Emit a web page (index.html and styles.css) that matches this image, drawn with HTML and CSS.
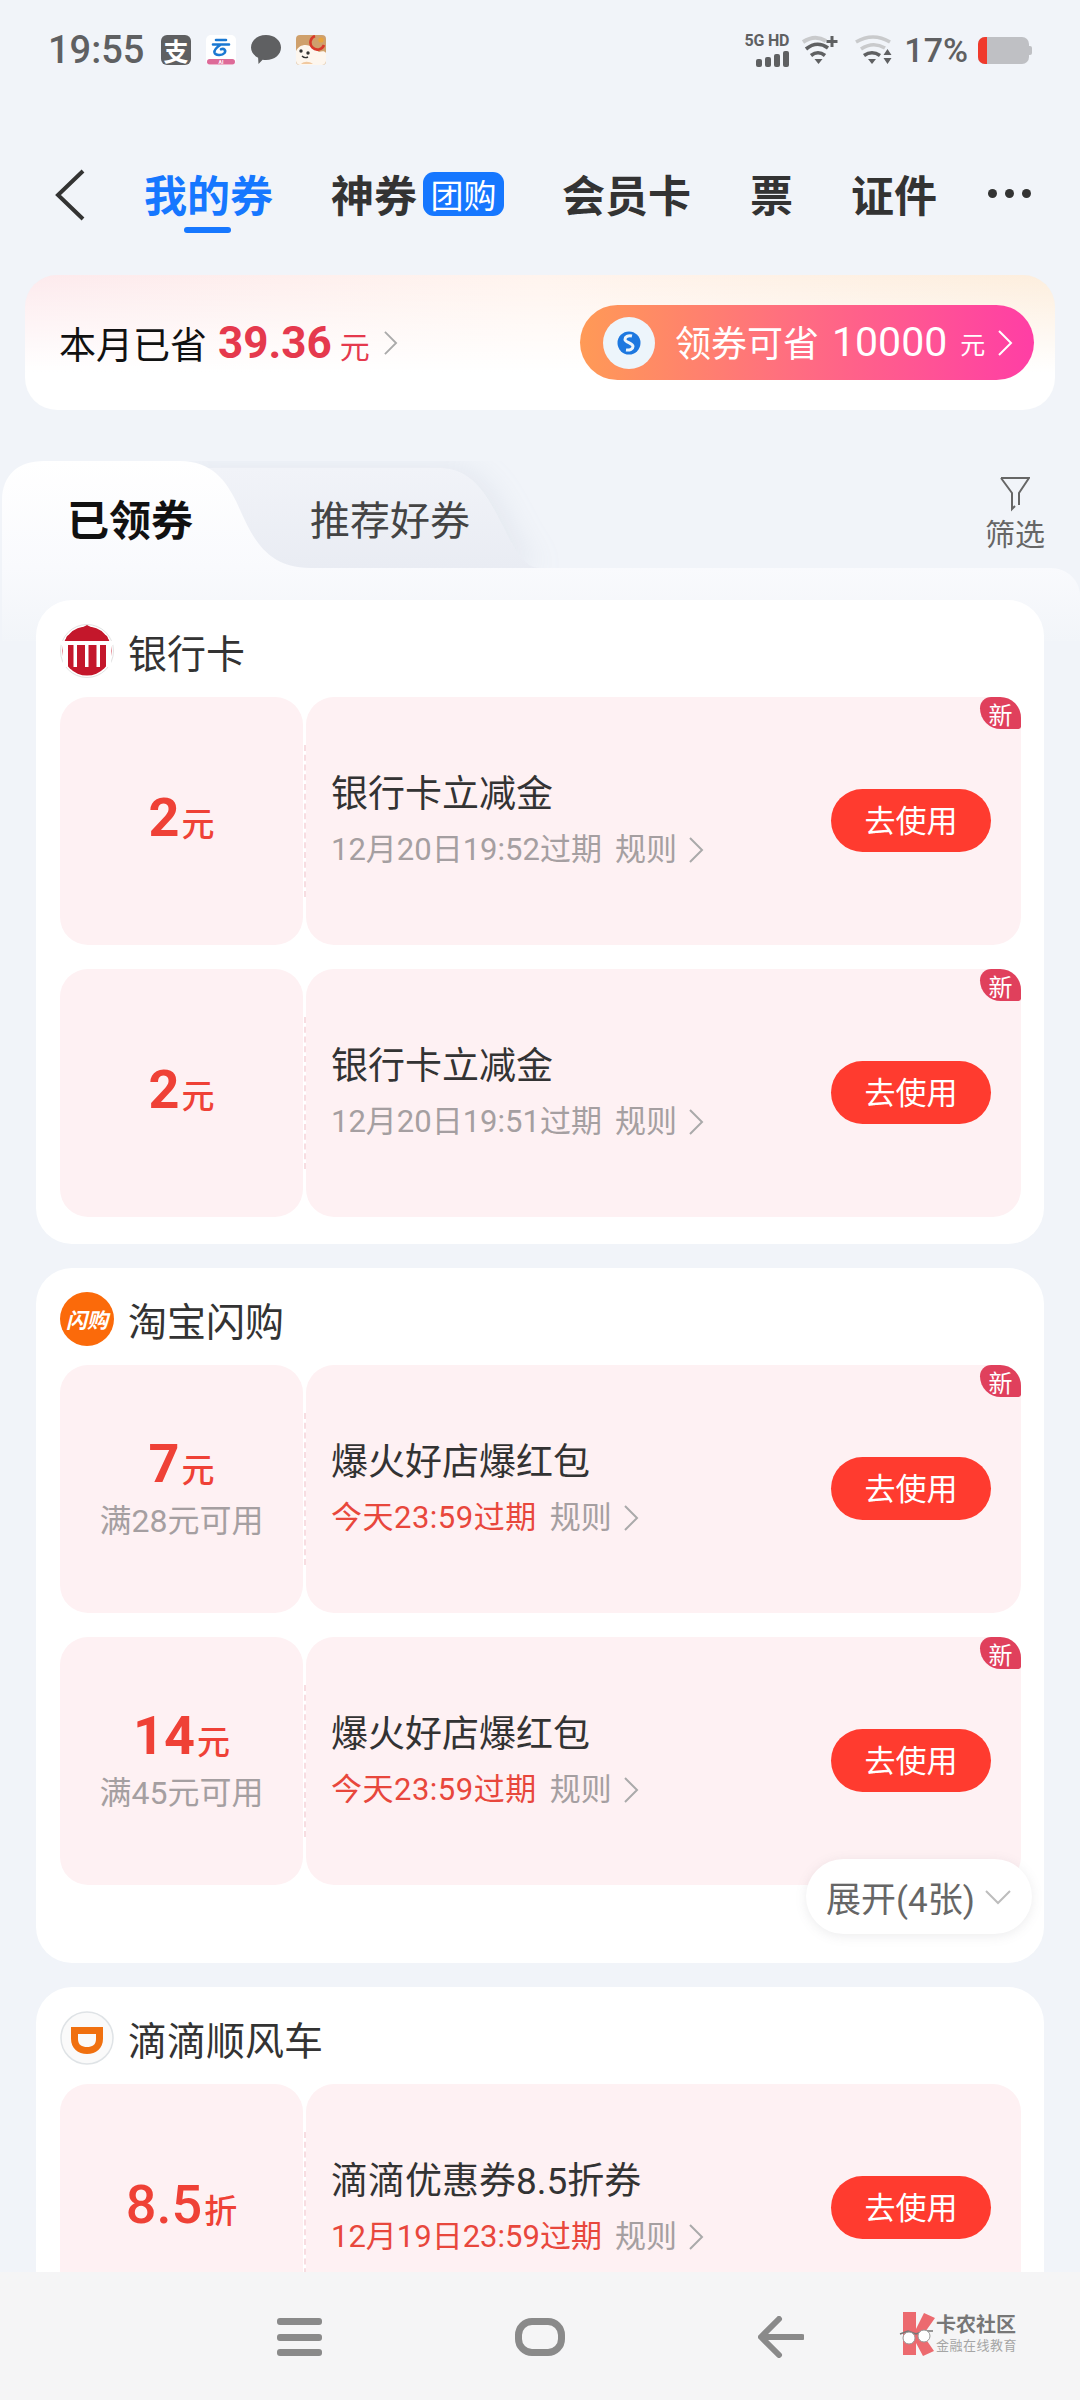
FILE: index.html
```html
<!DOCTYPE html>
<html lang="zh-CN">
<head>
  <meta charset="UTF-8" />
  <meta name="viewport" content="width=device-width, initial-scale=1.0"/>
  <title>我的券</title>
  <link rel="stylesheet" href="styles.css">
</head>
<body>
  <div class="screen">
    <main class="main">
      <!-- Status bar -->
      <div class="status">
        <span class="time">19:55</span>
        <span class="app-icon app-alipay">支</span>
        <svg class="app-icon" viewBox="0 0 30 30">
          <rect width="30" height="30" rx="5" fill="#fff"/>
          <path d="M10 5h10M7 9.500h16M15 9.500c-4 2.500-7 5.500-6.500 8 .7 3 7.500 3.500 10 .5 1.800-2.500-.5-5-3.500-3.800" fill="none" stroke="#1a78d2" stroke-width="2.600" stroke-linecap="round"/>
          <rect x="1" y="24" width="28" height="5.500" rx="2.700" fill="#dd6a98"/>
          <text x="15" y="28.500" class="ai-text">AI</text>
        </svg>
        <svg class="app-icon" viewBox="0 0 30 30">
          <path d="M15 0c8.500 0 15 5.500 15 12.500S23.500 25 15 25c-1.200 0-2.300-.1-3.400-.3L7.500 29l-.4-6.300C2.800 20.500 0 16.800 0 12.500 0 5.500 6.500 0 15 0z" fill="#5f6062"/>
        </svg>
        <svg class="app-icon" viewBox="0 0 30 30">
          <rect width="30" height="30" rx="4" fill="#cfa06c"/>
          <path d="M0 16c3-7 12-8 17-3l6 4c3-1 6-1 7 1v8c0 2-2 4-4 4H4c-2 0-4-2-4-4z" fill="#fdf6ee"/>
          <path d="M5 29c3-3 8-3 12 0z" fill="#f1c9a0"/>
          <circle cx="5" cy="16" r="1.700" fill="#333"/>
          <circle cx="12" cy="18" r="1.700" fill="#333"/>
          <path d="M6 21c2 2 4 2 6 1" fill="none" stroke="#333" stroke-width="1.400"/>
          <path d="M19 1a7 7 0 1 0 9 9" fill="none" stroke="#d8392b" stroke-width="2.600"/>
          <circle cx="25" cy="5" r="2.600" fill="#e8a33c"/>
        </svg>
        <span class="status-gap"></span>
        <span class="signal">
          <span class="signal-text">5G HD</span>
          <span class="bars"><i class="b1"></i><i class="b2"></i><i class="b3"></i><i class="b4"></i></span>
        </span>
        <svg class="wifi wifi-plus" viewBox="0 0 38 30">
          <path d="M1 7Q13-1 24 6" fill="none" stroke="#c9cacc" stroke-width="4"/>
          <path d="M4 14Q15 5 26 13M9 20.500Q16 15 23 20.500" fill="none" stroke="#5f6062" stroke-width="3.600"/>
          <path d="M12.500 24h8l-4 5z" fill="#5f6062"/>
          <path d="M30 1v11M24.500 6.500h11" stroke="#5f6062" stroke-width="3"/>
        </svg>
        <svg class="wifi wifi-last" viewBox="0 0 38 30">
          <path d="M1 7Q18-3 35 7M6 14Q18 6 30 13" fill="none" stroke="#c9cacc" stroke-width="3.600"/>
          <path d="M9 20.500Q17 15 25 20.500" fill="none" stroke="#5f6062" stroke-width="3.600"/>
          <path d="M13 24h8l-4 5z" fill="#5f6062"/>
          <path d="M32.500 14l4 6h-8zM32.500 29l-4-6h8z" fill="#5f6062"/>
        </svg>
        <span class="battery-text">17%</span>
        <span class="battery"><i class="battery-level"></i></span>
        <i class="battery-nub"></i>
      </div>

      <!-- Top tabs -->
      <nav class="topnav">
        <svg class="back" viewBox="0 0 32 52"><polyline points="29,2 4,26 29,50" fill="none" stroke="#333" stroke-width="4"/></svg>
        <a class="topnav-item active">我的券</a>
        <a class="topnav-item item-god">神券</a>
        <span class="group-badge">团购</span>
        <a class="topnav-item item-card">会员卡</a>
        <a class="topnav-item item-ticket">票</a>
        <a class="topnav-item item-id">证件</a>
        <span class="more"><i></i><i></i><i></i></span>
      </nav>

      <!-- Savings banner -->
      <section class="savings">
        <span class="savings-label">本月已省</span>
        <span class="savings-num">39.36</span>
        <span class="savings-unit">元</span>
        <svg class="chev savings-chev" viewBox="0 0 16 28"><polyline points="2,2 14,14 2,26"/></svg>
        <div class="save-pill">
          <span class="save-logo">
            <svg viewBox="0 0 24 24"><circle cx="12" cy="12" r="11.500" fill="#1d78e0"/><path d="M15 5c-4-1-7 1-7 3.500 0 3 8 3.500 8 7 0 2.500-3 4-7 3.500" fill="none" stroke="#edf5fb" stroke-width="3"/></svg>
          </span>
          <span class="save-text">领券可省</span>
          <span class="save-num">10000</span>
          <span class="save-unit">元</span>
          <svg class="chev save-chev" viewBox="0 0 16 28"><polyline points="2,2 14,14 2,26"/></svg>
        </div>
      </section>

      <!-- Coupon tabs -->
      <div class="tabs">
        <svg class="tabs-bg" viewBox="0 0 1080 180">
          <defs>
            <linearGradient id="tabGrad" x1="0" y1="0" x2="0" y2="1">
              <stop offset="0" stop-color="#ffffff"/>
              <stop offset="1" stop-color="#f9fafd"/>
            </linearGradient>
            <linearGradient id="idleGrad" x1="0" y1="0" x2="0" y2="1">
              <stop offset="0" stop-color="#f1f3f8"/>
              <stop offset="1" stop-color="#e9ecf3"/>
            </linearGradient>
            <linearGradient id="panelGrad" x1="0" y1="0" x2="0" y2="1">
              <stop offset="0" stop-color="#f9fafd"/>
              <stop offset="1" stop-color="#f2f5f9"/>
            </linearGradient>
          </defs>
          <path class="tab-shadow" d="M180 7H440C475 7 490 40 503 65 515 90 525 107 540 107H180z" fill="url(#idleGrad)"/>
          <path d="M300 107H1050C1068 107 1080 120 1080 135V180H2V107z" fill="url(#panelGrad)"/>
          <path d="M2 40C2 14 18 0 44 0H180C212 0 226 20 236 40 250 70 262 107 310 107H2z" fill="url(#tabGrad)"/>
        </svg>
        <span class="tab tab-active">已领券</span>
        <span class="tab tab-idle">推荐好券</span>
        <div class="filter">
          <svg viewBox="0 0 30 36"><path d="M1 2h28L19 17v12M1 2l11 15v16l3-3" fill="none" stroke="#666" stroke-width="2"/></svg>
          <span>筛选</span>
        </div>
      </div>

      <!-- Bank card -->
      <section class="group group-first">
        <header class="group-head">
          <svg class="brand" viewBox="0 0 54 54">
            <circle cx="27" cy="27" r="26.500" fill="#fff" stroke="#e2e2e2"/>
            <circle cx="27" cy="27" r="24.500" fill="#c4172b"/>
            <path d="M27 1L47 12 49 17H5L7 12z" fill="#c4172b"/>
            <rect x="1" y="17" width="52" height="4" fill="#fff"/>
            <path d="M3 21h5v22H3zM13.500 21h3.500v22h-3.500zM25 21h3.500v22H25zM36.500 21h3.500v22h-3.500zM46 21h5v22h-5z" fill="#fff"/>
          </svg>
          <h3>银行卡</h3>
        </header>
        <div class="coupon">
          <div class="coupon-left">
            <div class="amount"><b>2</b><span>元</span></div>
          </div>
          <div class="coupon-right">
            <div class="coupon-info">
              <div class="coupon-title">银行卡立减金</div>
              <div class="coupon-sub"><span class="expire">12月20日19:52过期</span><span class="rule">规则</span><svg class="chev rule-chev" viewBox="0 0 16 28"><polyline points="2,2 14,14 2,26"/></svg></div>
            </div>
            <button class="use-btn">去使用</button>
            <span class="new-tag">新</span>
          </div>
        </div>
        <div class="coupon">
          <div class="coupon-left">
            <div class="amount"><b>2</b><span>元</span></div>
          </div>
          <div class="coupon-right">
            <div class="coupon-info">
              <div class="coupon-title">银行卡立减金</div>
              <div class="coupon-sub"><span class="expire">12月20日19:51过期</span><span class="rule">规则</span><svg class="chev rule-chev" viewBox="0 0 16 28"><polyline points="2,2 14,14 2,26"/></svg></div>
            </div>
            <button class="use-btn">去使用</button>
            <span class="new-tag">新</span>
          </div>
        </div>
      </section>

      <!-- Taobao flash -->
      <section class="group group-flash">
        <header class="group-head">
          <span class="brand brand-flash">闪购</span>
          <h3>淘宝闪购</h3>
        </header>
        <div class="coupon">
          <div class="coupon-left">
            <div class="amount"><b>7</b><span>元</span></div>
            <div class="limit">满28元可用</div>
          </div>
          <div class="coupon-right">
            <div class="coupon-info">
              <div class="coupon-title">爆火好店爆红包</div>
              <div class="coupon-sub"><span class="expire urgent today">今天23:59过期</span><span class="rule">规则</span><svg class="chev rule-chev" viewBox="0 0 16 28"><polyline points="2,2 14,14 2,26"/></svg></div>
            </div>
            <button class="use-btn">去使用</button>
            <span class="new-tag">新</span>
          </div>
        </div>
        <div class="coupon">
          <div class="coupon-left">
            <div class="amount"><b>14</b><span>元</span></div>
            <div class="limit">满45元可用</div>
          </div>
          <div class="coupon-right">
            <div class="coupon-info">
              <div class="coupon-title">爆火好店爆红包</div>
              <div class="coupon-sub"><span class="expire urgent today">今天23:59过期</span><span class="rule">规则</span><svg class="chev rule-chev" viewBox="0 0 16 28"><polyline points="2,2 14,14 2,26"/></svg></div>
            </div>
            <button class="use-btn">去使用</button>
            <span class="new-tag">新</span>
          </div>
        </div>
        <div class="expand">
          <span>展开(4张)</span>
          <svg viewBox="0 0 28 16"><polyline points="2,2 14,14 26,2" fill="none" stroke="#bdbdbd" stroke-width="2"/></svg>
        </div>
      </section>

      <!-- Didi -->
      <section class="group">
        <header class="group-head">
          <svg class="brand" viewBox="0 0 54 54">
            <circle cx="27" cy="27" r="26" fill="#fafafa" stroke="#dfe3e6" stroke-width="1.500"/>
            <path d="M11 16h32v12c0 9-7 15-16 15s-16-6-16-15z" fill="#f0700f"/>
            <path d="M18 23h18v5c0 6-4 8-9 8s-9-2-9-8z" fill="#fafafa"/>
          </svg>
          <h3>滴滴顺风车</h3>
        </header>
        <div class="coupon">
          <div class="coupon-left">
            <div class="amount amount-light"><b>8.5</b><span>折</span></div>
          </div>
          <div class="coupon-right">
            <div class="coupon-info">
              <div class="coupon-title">滴滴优惠券8.5折券</div>
              <div class="coupon-sub"><span class="expire urgent">12月19日23:59过期</span><span class="rule">规则</span><svg class="chev rule-chev" viewBox="0 0 16 28"><polyline points="2,2 14,14 2,26"/></svg></div>
            </div>
            <button class="use-btn">去使用</button>
          </div>
        </div>
      </section>
    </main>

    <!-- System nav bar -->
    <footer class="sysnav">
      <span class="sys-menu"><i></i><i></i><i></i></span>
      <span class="sys-home"></span>
      <svg class="sys-back" viewBox="0 0 46 42"><path d="M21 3L3 21l18 18M4 21h40" fill="none" stroke="#8a8a8a" stroke-width="6" stroke-linecap="round" stroke-linejoin="round"/></svg>
      <div class="mark">
        <svg class="mark-logo" viewBox="0 0 36 44">
          <path d="M4 0h13v17L25 1l11 5-12 17 11 16-11 5-7-13v12H4z" fill="#ec6a6f"/>
          <path d="M1 22l8-3 8 3 8-3 9 0" fill="none" stroke="#777" stroke-width="1.500"/>
          <circle cx="10" cy="26" r="6" fill="#fff" stroke="#999"/>
          <circle cx="25" cy="24" r="6" fill="#fff" stroke="#999"/>
        </svg>
        <div class="mark-text">
          <span class="mark-name">卡农社区</span>
          <span class="mark-sub">金融在线教育</span>
        </div>
      </div>
    </footer>
  </div>
</body>
</html>
```

FILE: styles.css
```css
* {
  box-sizing: border-box;
}

body {
  margin: 0;
  font-family: Roboto, "Noto Sans CJK SC", sans-serif;
  color: #333;
  background-color: #f1f4f9;
}

.screen {
  display: flex;
  flex-direction: column;
  width: 1080px;
  height: 2400px;
  overflow: hidden;
}

.main {
  flex: 1;
  min-height: 0;
  overflow: hidden;
}

/* Status bar */
.status {
  display: flex;
  align-items: center;
  height: 100px;
  padding: 0 48px;
  color: #5f6062;
}

.time {
  width: 113px;
  font-size: 38px;
  font-weight: 500;
}

.app-icon {
  width: 30px;
  height: 30px;
  margin-right: 15px;
  flex-shrink: 0;
}

.app-alipay {
  display: flex;
  align-items: center;
  justify-content: center;
  border-radius: 6px;
  background-color: #5f6062;
  color: #fff;
  font-size: 25px;
  font-weight: 700;
}

.ai-text {
  font-size: 5px;
  font-weight: 700;
  fill: #fff;
  text-anchor: middle;
}

.status-gap {
  flex: 1;
}

.signal {
  display: flex;
  flex-direction: column;
  align-items: flex-end;
  width: 48px;
  margin-right: 13px;
}

.signal-text {
  font-size: 16px;
  line-height: 15px;
  font-weight: 700;
  white-space: nowrap;
  letter-spacing: -0.2px;
}

.bars {
  display: flex;
  align-items: flex-end;
  gap: 3px;
  margin-top: 3px;
}

.bars i {
  width: 6px;
  border-radius: 2px;
  background-color: #5f6062;
}

.b1 { height: 8px; }
.b2 { height: 10px; }
.b3 { height: 13px; }
.b4 { height: 16px; }

.wifi {
  width: 38px;
  height: 30px;
  margin-right: 15px;
}

.wifi-last {
  margin-right: 11px;
}

.battery-text {
  font-size: 34px;
  font-weight: 500;
  white-space: nowrap;
}

.battery {
  display: block;
  width: 51px;
  height: 27px;
  margin-left: 10px;
  border-radius: 7px;
  background-color: #bfc0c4;
  overflow: hidden;
}

.battery-level {
  display: block;
  width: 9px;
  height: 100%;
  background-color: #f03a2c;
}

.battery-nub {
  display: block;
  width: 3px;
  height: 9px;
  border-radius: 0 2px 2px 0;
  background-color: #bfc0c4;
}

/* Top tabs */
.topnav {
  display: flex;
  align-items: center;
  height: 90px;
  margin-top: 48px;
  padding-left: 54px;
}

.back {
  width: 32px;
  height: 52px;
  margin-top: 4px;
  margin-right: 58px;
}

.topnav-item {
  font-size: 43px;
  font-weight: 700;
  white-space: nowrap;
}

.topnav-item.active {
  position: relative;
  color: #1677ff;
}

.topnav-item.active::after {
  content: "";
  position: absolute;
  left: 40px;
  bottom: -9px;
  width: 47px;
  height: 6px;
  border-radius: 3px;
  background-color: #1677ff;
}

.item-god { margin-left: 58px; }

.group-badge {
  display: flex;
  align-items: center;
  justify-content: center;
  width: 81px;
  height: 44px;
  margin-left: 6px;
  margin-top: 1px;
  border-radius: 11px;
  background-color: #1677ff;
  color: #fff;
  font-size: 33px;
}

.item-card { margin-left: 58px; }
.item-ticket { margin-left: 59px; }
.item-id { margin-left: 58px; }

.more {
  display: flex;
  gap: 8px;
  margin-left: 51px;
}

.more i {
  width: 9px;
  height: 9px;
  border-radius: 50%;
  background-color: #333;
}

/* Savings banner */
.savings {
  display: flex;
  align-items: center;
  height: 135px;
  margin: 37px 25px 0;
  padding-left: 34px;
  border-radius: 32px;
  background: linear-gradient(to bottom, rgba(255, 255, 255, 0), #fff 72%), linear-gradient(90deg, #fdeaed, #fff4ee 50%, #fdeedd);
}

.savings-label {
  font-size: 37px;
  color: #111;
}

.savings-num {
  margin-left: 11px;
  font-size: 44px;
  font-weight: 700;
  color: #e5394d;
}

.savings-unit {
  margin-left: 8px;
  font-size: 30px;
  margin-top: 4px;
  color: #e5394d;
}

.chev {
  fill: none;
  stroke: #aaa;
  stroke-width: 2;
}

.savings-chev {
  width: 15px;
  height: 26px;
  margin-left: 13px;
}

.save-pill {
  display: flex;
  align-items: center;
  width: 454px;
  height: 75px;
  margin-left: auto;
  margin-right: 21px;
  padding-left: 23px;
  border-radius: 38px;
  background: linear-gradient(90deg, #ff9a56, #ff6f7f 45%, #ff3ea5);
  color: #fff;
}

.save-logo {
  display: flex;
  align-items: center;
  justify-content: center;
  width: 52px;
  height: 52px;
  border-radius: 50%;
  background-color: #edf5fb;
}

.save-logo svg {
  width: 24px;
  height: 24px;
}

.save-text {
  margin-left: 20px;
  margin-top: -3px;
  font-size: 36px;
}

.save-num {
  margin-left: 13px;
  margin-top: -1px;
  font-size: 41px;
}

.save-unit {
  margin-left: 13px;
  font-size: 25px;
}

.save-chev {
  width: 16px;
  height: 28px;
  margin-left: 12px;
  stroke: #fff;
}

/* Coupon tabs */
.tabs {
  position: relative;
  display: flex;
  align-items: center;
  height: 107px;
  margin-top: 51px;
  padding-top: 6px;
}

.tabs-bg {
  position: absolute;
  left: 0;
  top: 0;
  width: 1080px;
  height: 180px;
}

.tab-shadow {
  filter: drop-shadow(8px -1px 14px rgba(150, 160, 185, 0.14));
}

.tab {
  position: relative;
  white-space: nowrap;
}

.tab-active {
  margin-left: 67px;
  font-size: 42px;
  font-weight: 700;
  color: #111;
}

.tab-idle {
  margin-left: 117px;
  font-size: 40px;
  color: #444;
}

.filter {
  position: relative;
  display: flex;
  flex-direction: column;
  align-items: center;
  margin-left: auto;
  margin-right: 35px;
  margin-top: -6px;
  font-size: 30px;
  color: #666;
  line-height: 36px;
}

.filter svg {
  width: 30px;
  height: 36px;
  margin-bottom: 5px;
}

/* Coupon groups */
.group {
  position: relative;
  margin: 24px 36px 0;
  padding: 0 23px 26px 24px;
  border-radius: 36px;
  background-color: #fff;
}

.group-first {
  margin-top: 32px;
  padding-bottom: 27px;
}

.group-flash {
  padding-bottom: 78px;
}

.group-head {
  display: flex;
  align-items: center;
  height: 97px;
  padding-top: 4px;
}

.group-head h3 {
  margin: 0 0 0 14px;
  font-size: 39px;
  font-weight: 400;
  color: #333;
}

.brand {
  display: block;
  width: 54px;
  height: 54px;
  flex-shrink: 0;
}

.brand-flash {
  display: flex;
  align-items: center;
  justify-content: center;
  border-radius: 50%;
  background-color: #fb6a0a;
  color: #fff;
  font-size: 21px;
  font-weight: 700;
  font-style: italic;
}

.coupon {
  display: flex;
  gap: 3px;
  height: 248px;
}

.coupon + .coupon {
  margin-top: 24px;
}

.coupon-left {
  display: flex;
  flex-direction: column;
  align-items: center;
  justify-content: center;
  width: 243px;
  border-radius: 28px;
  background-color: #fef1f3;
}

.amount {
  display: flex;
  align-items: baseline;
  color: #ef4136;
  line-height: 56px;
}

.amount b {
  font-size: 54px;
  font-weight: 700;
}

.amount span {
  margin-left: 2px;
  font-size: 33px;
  font-weight: 500;
}

.amount-light b {
  font-weight: 500;
}

.limit {
  font-size: 32px;
  line-height: 44px;
  color: #a59fa1;
}

.coupon-right {
  position: relative;
  display: flex;
  flex: 1;
  align-items: center;
  justify-content: space-between;
  padding: 0 30px 0 25px;
  border-radius: 28px;
  background-color: #fef1f3;
}

.coupon-right::before {
  content: "";
  position: absolute;
  left: -2px;
  top: 48px;
  bottom: 48px;
  border-left: 2px dashed #f7dde1;
}

.coupon-title {
  font-size: 37px;
  line-height: 50px;
  color: #333;
  white-space: nowrap;
}

.coupon-sub {
  display: flex;
  align-items: center;
  margin-top: 8px;
  font-size: 31px;
  line-height: 44px;
  white-space: nowrap;
}

.expire {
  color: #a59fa1;
}

.expire.urgent {
  color: #e8473c;
}

.expire.today {
  letter-spacing: 0.5px;
}

.rule {
  margin-left: 13px;
  color: #a59fa1;
}

.rule-chev {
  width: 16px;
  height: 30px;
  margin-left: 11px;
}

.use-btn {
  width: 160px;
  height: 63px;
  margin-top: -2px;
  padding: 0 0 3px;
  border: 0;
  border-radius: 32px;
  background-color: #ff3b2f;
  color: #fff;
  font-family: inherit;
  font-size: 31px;
}

.new-tag {
  position: absolute;
  right: 0;
  top: 0;
  display: flex;
  align-items: center;
  justify-content: center;
  width: 41px;
  height: 32px;
  border-radius: 14px 26px 3px 26px;
  background-color: #e0405c;
  color: #fff;
  font-size: 24px;
}

.expand {
  position: absolute;
  right: 12px;
  bottom: 29px;
  display: flex;
  align-items: center;
  justify-content: center;
  gap: 9px;
  width: 226px;
  height: 75px;
  border-radius: 38px;
  background-color: #fff;
  box-shadow: 0 2px 12px rgba(120, 120, 130, 0.14);
  color: #666;
  font-size: 35px;
}

.expand svg {
  width: 28px;
  height: 16px;
}

/* System nav bar */
.sysnav {
  display: flex;
  align-items: flex-start;
  height: 128px;
  flex-shrink: 0;
  padding: 46px 0 0 277px;
  background-color: #f5f5f6;
}

.sys-menu {
  display: flex;
  flex-direction: column;
  justify-content: space-between;
  width: 45px;
  height: 38px;
}

.sys-menu i {
  height: 7px;
  border-radius: 3px;
  background-color: #8a8a8a;
}

.sys-home {
  width: 50px;
  height: 38px;
  margin-left: 193px;
  border: 7px solid #8a8a8a;
  border-radius: 17px;
}

.sys-back {
  width: 46px;
  height: 42px;
  margin-left: 193px;
  margin-top: -2px;
}

.mark {
  display: flex;
  align-items: center;
  gap: 1px;
  margin-left: 95px;
  margin-top: -6px;
}

.mark-logo {
  width: 36px;
  height: 44px;
}

.mark-text {
  display: flex;
  flex-direction: column;
  white-space: nowrap;
}

.mark-name {
  font-size: 20px;
  line-height: 24px;
  font-weight: 700;
  color: #777;
}

.mark-sub {
  font-size: 13px;
  line-height: 18px;
  color: #a5a5a5;
  letter-spacing: 0.5px;
}
```
